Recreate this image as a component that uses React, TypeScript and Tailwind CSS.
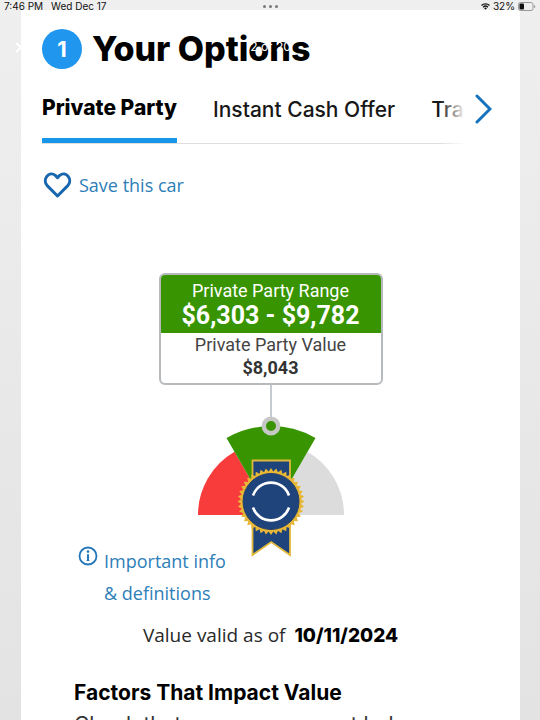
import React from "react";

const tabs = [
  { label: "Private Party", active: true },
  { label: "Instant Cash Offer", active: false },
  { label: "Trade-In", active: false },
];

function StatusBar() {
  return (
    <header className="relative z-10 flex h-[10px] items-start justify-between bg-[#efefef] px-1 font-['Inter',sans-serif] text-[10px] leading-[13px] text-[#111]">
      <div className="flex flex-1 gap-2">
        <span>7:46 PM</span>
        <span>Wed Dec 17</span>
      </div>
      <div className="flex gap-[3px] pt-[5px]" aria-hidden="true">
        <i className="size-[3px] rounded-full bg-[#777]" />
        <i className="size-[3px] rounded-full bg-[#777]" />
        <i className="size-[3px] rounded-full bg-[#777]" />
      </div>
      <div className="flex flex-1 items-center justify-end gap-[3px]">
        <svg width="9" height="7" viewBox="0 0 18 14" fill="none" stroke="#111" strokeWidth="2.6" aria-hidden="true">
          <path d="M1 5a11.3 11.3 0 0 1 16 0M4.2 8.4a6.8 6.8 0 0 1 9.6 0" />
          <path d="M6.3 10.6a3.8 3.8 0 0 1 5.4 0L9 13.5z" fill="#111" stroke="none" />
        </svg>
        <span>32%</span>
        <svg width="18" height="9" viewBox="0 0 18 9" aria-hidden="true">
          <rect x="0.5" y="0.5" width="14.5" height="8" rx="2" fill="none" stroke="#999" />
          <rect x="1.5" y="1.5" width="4.5" height="6" rx="1" fill="#111" />
          <path d="M16 3v3q1.3-.5 1.3-1.5T16 3z" fill="#999" />
        </svg>
      </div>
    </header>
  );
}

function sealPoints(cx: number, cy: number, outer: number, inner: number, teeth: number) {
  return Array.from({ length: teeth * 2 }, (_, i) => {
    const r = i % 2 ? inner : outer;
    const a = (i * Math.PI) / teeth;
    return `${(cx + r * Math.sin(a)).toFixed(2)},${(cy - r * Math.cos(a)).toFixed(2)}`;
  }).join(" ");
}

function Gauge() {
  return (
    <svg className="mx-auto block" width="160" height="172" viewBox="0 0 160 172" role="img" aria-label="Value gauge">
      <path d="M80 130H7A73 73 0 0 1 43.5 66.8Z" fill="#f83b3b" />
      <path d="M80 130H153A73 73 0 0 0 116.5 66.8Z" fill="#dcdcdc" />
      <path d="M80 130 35.5 53A89 89 0 0 1 124.5 53Z" fill="#389400" />
      <path d="M80 0V32" stroke="#b3bac2" strokeWidth="1.5" />
      <circle cx="80" cy="41" r="7.2" fill="#389400" stroke="#c6c8c6" strokeWidth="4.4" />
      <path d="M61.5 75.5H99V100H61.5Z" fill="#1f437b" stroke="#e0b83c" strokeWidth="1.8" />
      <path d="M61.5 130H99V170L80.2 157 61.5 170Z" fill="#1f437b" stroke="#e0b83c" strokeWidth="1.8" />
      <polygon points={sealPoints(80, 116.5, 33.5, 30, 40)} fill="#e8b735" />
      <circle cx="80" cy="116.5" r="28" fill="#1f437b" stroke="#27406a" strokeWidth="1" />
      <path d="M62 110.5A19 19 0 0 1 98 110.5M62 122.5A19 19 0 0 0 98 122.5" fill="none" stroke="#fff" strokeWidth="2.6" />
    </svg>
  );
}

export default function App() {
  return (
    <div className="flex h-screen flex-col overflow-hidden bg-linear-to-b from-[#efefef] to-[#e3e3e3] font-['Open_Sans',sans-serif] text-black">
      <StatusBar />
      <main className="relative ml-[21px] mr-5 flex-1 bg-white">
        <svg className="absolute -left-[6px] top-8 text-white" width="7" height="11" viewBox="0 0 7 11" fill="none" stroke="currentColor" strokeWidth="2" aria-hidden="true">
          <path d="m1 1 5 4.5-5 4.5" />
        </svg>
        <span className="absolute inset-x-0 top-[29px] text-center font-['Inter',sans-serif] text-[12px] leading-4 text-white">2 of 20</span>

        <div className="flex items-center gap-[10px] pl-[21px] pt-[19px] font-['Inter',sans-serif]">
          <span className="flex size-10 items-center justify-center rounded-full bg-[#2196ef] text-[22px] font-bold text-white">1</span>
          <h1 className="text-[34px] font-extrabold leading-10">Your Options</h1>
        </div>

        <div className="relative ml-[21px] mr-6 mt-[23px] overflow-hidden">
          <nav className="flex gap-9 whitespace-nowrap border-b border-[#dedede] font-['Inter',sans-serif] text-[21px] leading-6" aria-label="Valuation type">
            {tabs.map((t) => (
              <button
                key={t.label}
                type="button"
                className={
                  t.active
                    ? "border-b-[5px] border-[#1896ea] pb-[18px] pt-1 font-extrabold"
                    : "border-b-[5px] border-transparent pb-4 pt-[6px] font-medium text-[#171717]"
                }
              >
                {t.label}
              </button>
            ))}
          </nav>
          <div className="absolute inset-y-0 right-0 flex w-14 items-start justify-end bg-linear-to-r from-transparent via-white via-45% to-white">
            <button type="button" aria-label="Next tab" className="pr-1 pt-[2px] text-[#1672bd]">
              <svg width="18" height="30" viewBox="0 0 18 30" fill="none" stroke="currentColor" strokeWidth="3" strokeLinecap="round">
                <path d="m3 2 13 13L3 28" />
              </svg>
            </button>
          </div>
        </div>

        <button type="button" className="ml-[22px] mt-[27px] flex items-center gap-[7px] text-[18px] leading-7 text-[#2e7eb8]">
          <svg width="29" height="26" viewBox="0 0 29 26" fill="none" stroke="#1766ae" strokeWidth="3" strokeLinejoin="round" aria-hidden="true">
            <path d="M14.5 24 4.2 13.6C-1.2 7.5 6 -1.5 12.3 3.4L14.5 5.6 16.7 3.4C23-1.5 30.2 7.5 24.8 13.6Z" />
          </svg>
          Save this car
        </button>

        <section className="mx-auto mt-[74px] w-[224px] overflow-hidden rounded-md border-2 border-[#b6babd] bg-white text-center font-['Roboto',sans-serif]">
          <div className="-mx-px -mt-px bg-[#389400] pb-1 pt-[5px] text-white">
            <h2 className="text-[18px] leading-6">Private Party Range</h2>
            <p className="text-[25px] font-bold leading-[26px]">$6,303 - $9,782</p>
          </div>
          <div className="pb-1 text-[#444]">
            <h2 className="text-[18px] leading-6">Private Party Value</h2>
            <p className="text-[18px] font-bold leading-[22px] text-[#333]">$8,043</p>
          </div>
        </section>
        <Gauge />

        <a href="#info" className="-mt-3 ml-[57px] flex w-fit items-start gap-[6px] text-[18px] leading-8 text-[#2e7eb8]">
          <svg className="mt-px" width="20" height="20" viewBox="0 0 20 20" fill="none" stroke="#2277ba" strokeWidth="1.8" aria-hidden="true">
            <circle cx="10" cy="10" r="8.5" />
            <path d="M10 8.2v6.6" strokeWidth="2" />
            <path d="M8.6 14.5h2.8" strokeWidth="1" />
            <circle cx="10" cy="5.6" r="1.3" fill="#2277ba" stroke="none" />
          </svg>
          <span>
            Important info
            <br />& definitions
          </span>
        </a>

        <p className="mt-[10px] text-center text-[19px] leading-8 text-[#292929]">
          Value valid as of <strong className="ml-1 font-['Inter',sans-serif] font-extrabold text-black">10/11/2024</strong>
        </p>

        <div className="ml-[53px] mt-[27px] whitespace-nowrap font-['Inter',sans-serif]">
          <h2 className="text-[21px] font-bold leading-7">Factors That Impact Value</h2>
          <p className="mt-1 text-[21px] leading-7 text-[#333]">Check that yours are correct below.</p>
        </div>
      </main>
    </div>
  );
}
